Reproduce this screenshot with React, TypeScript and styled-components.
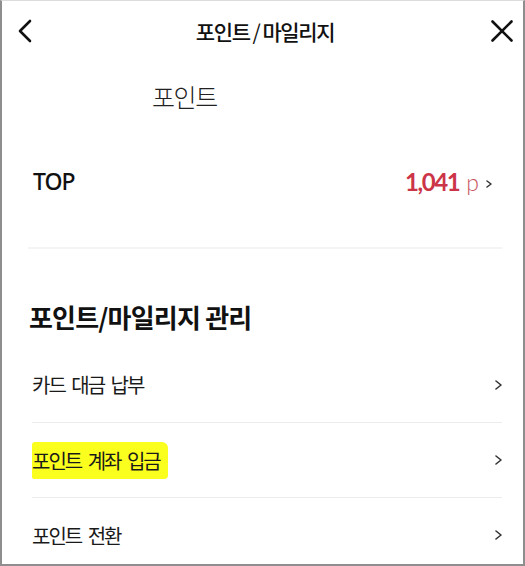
import React from "react";
import styled, { createGlobalStyle } from "styled-components";

const Global = createGlobalStyle`
  html, body { margin: 0; padding: 0; background: #fff; }
  * { box-sizing: border-box; }
  body { font-family: "Noto Sans CJK KR", "Noto Sans", sans-serif; color: #111; }
`;

const Page = styled.div`
  width: 525px;
  height: 566px;
  overflow: hidden;
  background: #fff;
  border-left: 2px solid #8e8e8e;
  border-right: 2px solid #8e8e8e;
  border-bottom: 2px solid #8e8e8e;
  border-top: 1px solid #dcdcdc;
  display: flex;
  flex-direction: column;
  & > * {
    flex-shrink: 0;
  }
`;

const Header = styled.header`
  height: 59px;
  display: grid;
  grid-template-columns: 1fr auto 1fr;
  align-items: center;
  padding: 0 10px 0 15px;
`;

const IconButton = styled.button<{ $align: "start" | "end" }>`
  border: 0;
  background: none;
  padding: 0;
  display: flex;
  justify-self: ${(p) => p.$align};
  color: #111;
`;

const Title = styled.h1`
  margin: 0;
  font-size: 21px;
  font-weight: 500;
  letter-spacing: -1.4px;
`;

const Slash = styled.span`
  margin: 0 3px 0 3px;
  font-weight: 400;
`;

const SubTitle = styled.div`
  margin-top: 21px;
  padding-left: 150px;
  height: 30px;
  line-height: 30px;
  font-size: 25px;
  font-weight: 300;
  letter-spacing: -1.4px;
  color: #222;
`;

const PointRow = styled.div`
  margin: 41px 21px 0 26px;
  padding: 0 10px 37px 0;
  height: 97px;
  display: flex;
  align-items: center;
  justify-content: space-between;
  border-bottom: 2px solid #f4f4f4;
`;

const Grade = styled.span`
  font-family: "Noto Sans", sans-serif;
  font-size: 23px;
  font-weight: 500;
  letter-spacing: -1px;
  padding-left: 5px;
  color: #111;
`;

const Amount = styled.span`
  display: flex;
  align-items: center;
`;

const Number = styled.span`
  font-family: Lato, sans-serif;
  font-size: 24px;
  font-weight: 700;
  letter-spacing: -1.4px;
  color: #cc3447;
`;

const Unit = styled.span`
  font-family: Lato, sans-serif;
  font-size: 23px;
  font-weight: 300;
  color: #c85560;
  margin-left: 7px;
  position: relative;
  top: 1px;
`;

const Arrow = styled.span<{ $gap: number }>`
  display: flex;
  margin-left: ${(p) => p.$gap}px;
  position: relative;
  top: ${(p) => (p.$gap ? 3 : 0)}px;
`;

const SectionTitle = styled.h2`
  margin: 51px 0 0 27px;
  height: 34px;
  line-height: 34px;
  font-size: 26px;
  font-weight: 700;
  letter-spacing: -0.8px;
`;

const Menu = styled.ul`
  list-style: none;
  margin: 13px 21px 0 30px;
  padding: 0;
`;

const MenuItem = styled.li`
  height: 75px;
  display: flex;
  align-items: center;
  justify-content: space-between;
  & + & {
    border-top: 1px solid #ececec;
  }
`;

const MenuLabel = styled.span<{ $highlight?: boolean }>`
  font-size: 20px;
  font-weight: 400;
  letter-spacing: -2px;
  word-spacing: 4px;
  color: #1a1a1a;
  margin-left: ${(p) => (p.$highlight ? 0 : -2)}px;
  padding: ${(p) => (p.$highlight ? "4px 8px 4px 0" : "4px 8px 4px 2px")};
  background: ${(p) => (p.$highlight ? "#faff1e" : "transparent")};
  border-radius: ${(p) => (p.$highlight ? "3px 6px 4px 2px" : "0")};
`;

const Chevron = ({ w, h, stroke }: { w: number; h: number; stroke: number }) => (
  <svg width={w} height={h} viewBox={`0 0 ${w} ${h}`} fill="none">
    <polyline
      points={`1,1 ${w - 1},${h / 2} 1,${h - 1}`}
      stroke="#333"
      strokeWidth={stroke}
      strokeLinecap="round"
      strokeLinejoin="round"
    />
  </svg>
);

const items = [
  { label: "카드 대금 납부" },
  { label: "포인트 계좌 입금", highlight: true },
  { label: "포인트 전환" },
];

export default function App() {
  return (
    <>
      <Global />
      <Page>
        <Header>
          <IconButton $align="start" aria-label="back">
            <svg width="16" height="24" viewBox="0 0 16 24" fill="none">
              <polyline points="13,2 3,12 13,22" stroke="#111" strokeWidth="2.6" strokeLinecap="round" strokeLinejoin="round" />
            </svg>
          </IconButton>
          <Title>
            포인트<Slash>/</Slash>마일리지
          </Title>
          <IconButton $align="end" aria-label="close">
            <svg width="22" height="22" viewBox="0 0 22 22" fill="none">
              <path d="M1.5 1.5 L20.5 20.5 M20.5 1.5 L1.5 20.5" stroke="#111" strokeWidth="2.6" strokeLinecap="round" />
            </svg>
          </IconButton>
        </Header>
        <SubTitle>포인트</SubTitle>
        <PointRow>
          <Grade>TOP</Grade>
          <Amount>
            <Number>1,041</Number>
            <Unit>p</Unit>
            <Arrow $gap={7}>
              <Chevron w={6} h={8} stroke={1.5} />
            </Arrow>
          </Amount>
        </PointRow>
        <SectionTitle>포인트/마일리지 관리</SectionTitle>
        <Menu>
          {items.map((it) => (
            <MenuItem key={it.label}>
              <MenuLabel $highlight={it.highlight}>{it.label}</MenuLabel>
              <Arrow $gap={0}>
                <Chevron w={7} h={10} stroke={1.6} />
              </Arrow>
            </MenuItem>
          ))}
        </Menu>
      </Page>
    </>
  );
}
